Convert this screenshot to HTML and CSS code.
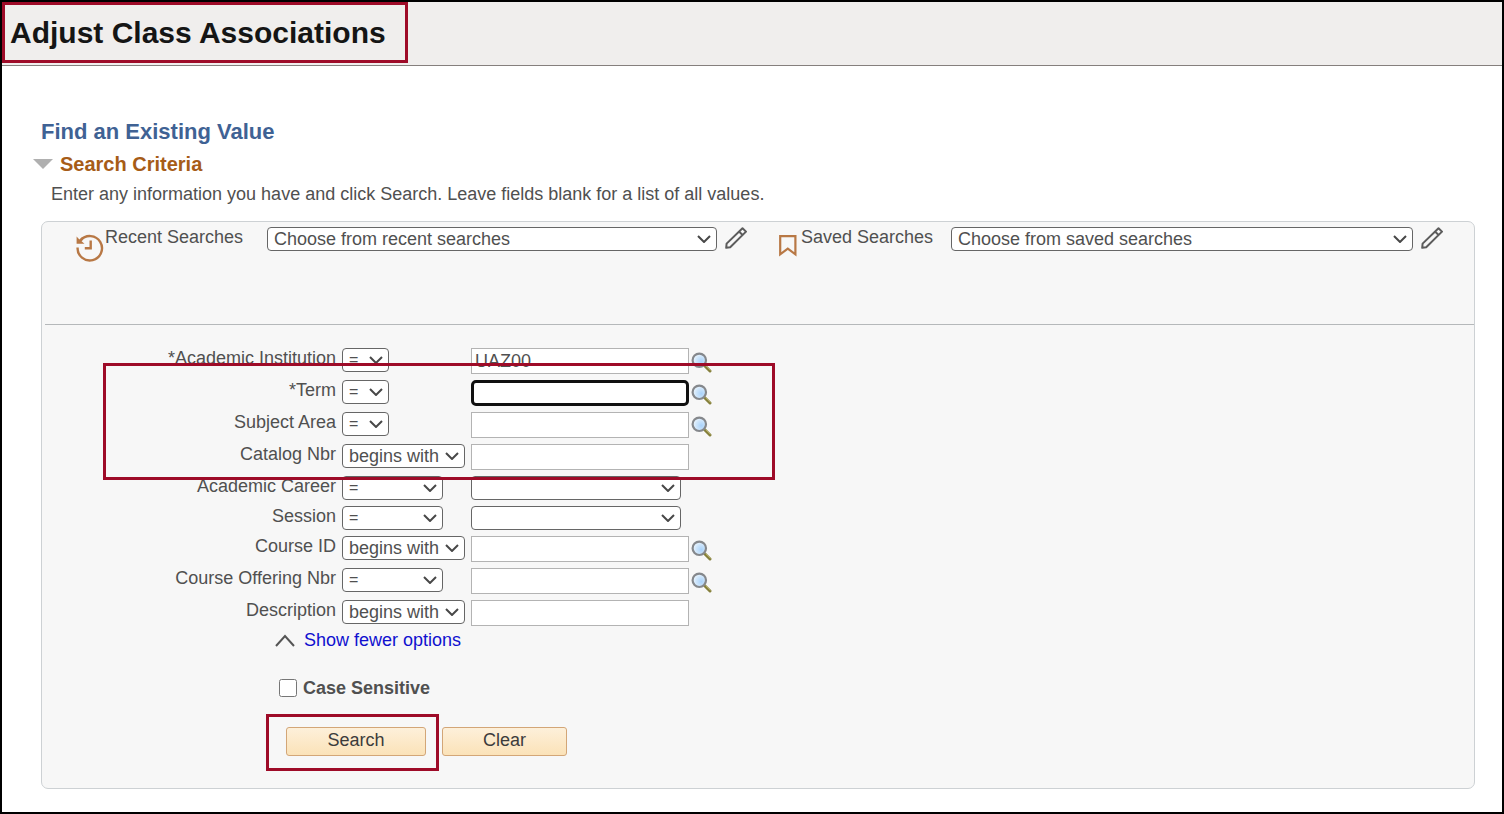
FILE: index.html
```html
<!DOCTYPE html>
<html lang="en">
<head>
    <meta charset="UTF-8">
    <meta name="viewport" content="width=device-width, initial-scale=1.0">
    <title>Adjust Class Associations</title>
    <link rel="stylesheet" href="styles.css">
</head>
<body>
    <!-- Shared icons -->
    <svg class="icon-defs" width="0" height="0" aria-hidden="true">
        <defs>
            <radialGradient id="lens" cx="65%" cy="60%" r="65%">
                <stop offset="0" stop-color="#a9d2fa"/>
                <stop offset="0.6" stop-color="#cfe6fb"/>
                <stop offset="1" stop-color="#edf6fd"/>
            </radialGradient>
        </defs>
        <symbol id="icon-lookup" viewBox="0 0 21 21">
            <path d="M13.5 13.5L19 19" stroke="#85803c" stroke-width="3" stroke-linecap="round"/>
            <path d="M14.5 13.5L19.5 18.5" stroke="#b3ab62" stroke-width="1"/>
            <circle cx="8.3" cy="8.3" r="6.7" fill="url(#lens)" stroke="#85888c" stroke-width="2.2"/>
        </symbol>
        <symbol id="icon-pencil" viewBox="0 0 22 23">
            <path d="M1.2 20.8L1.6 16.6L17.5 1.2L21 4.6L5.2 20.2L1.2 20.8ZM14 4.6L17.6 8" fill="none" stroke="#5c5c5c" stroke-width="2" stroke-linejoin="round"/>
        </symbol>
    </svg>

    <header class="page-header">
        <h1 class="page-title highlight">Adjust Class Associations</h1>
    </header>

    <main>
        <h2>Find an Existing Value</h2>
        <h3><span class="toggle"></span>Search Criteria</h3>
        <p class="hint">Enter any information you have and click Search. Leave fields blank for a list of all values.</p>

        <form class="panel">
            <div class="searches">
                <svg class="history-icon" width="28" height="28" viewBox="0 0 28 28" fill="none" stroke="#b87845" stroke-width="2.4">
                    <path d="M1.6 13.5A12.2 12.2 0 1 0 4.6 6.2"/>
                    <path d="M0.6 2.5V9.8H8.5L5.6 7.2L8 4.5L6 3.2L3.4 5.4Z" fill="#b87845" stroke="none"/>
                    <path d="M14.7 6.5V14.3H8.8"/>
                </svg>
                <label for="recent">Recent Searches</label>
                <select id="recent">
                    <option>Choose from recent searches</option>
                </select>
                <button type="button" class="icon-btn pencil" aria-label="Edit recent searches"><svg width="22" height="23"><use href="#icon-pencil"/></svg></button>

                <svg class="saved-icon" width="18" height="22" viewBox="0 0 18 22" fill="none" stroke="#b87845" stroke-width="2.2">
                    <path d="M1.2 1.2H16.4V19.3L8.8 13.6L1.2 19.3Z"/>
                </svg>
                <label for="saved">Saved Searches</label>
                <select id="saved">
                    <option>Choose from saved searches</option>
                </select>
                <button type="button" class="icon-btn pencil" aria-label="Edit saved searches"><svg width="22" height="23"><use href="#icon-pencil"/></svg></button>
            </div>

            <div class="fields">
                <div class="row">
                    <label for="institution">*Academic Institution</label>
                    <div class="operator"><select class="op-small" aria-label="Academic Institution operator"><option>=</option></select></div>
                    <input type="text" id="institution" value="UAZ00">
                    <button type="button" class="icon-btn" aria-label="Look up Academic Institution"><svg width="21" height="21"><use href="#icon-lookup"/></svg></button>
                </div>

                <div class="row-group">
                    <div class="row">
                        <label for="term">*Term</label>
                        <div class="operator"><select class="op-small" aria-label="Term operator"><option>=</option></select></div>
                        <input type="text" id="term" class="active" autofocus>
                        <button type="button" class="icon-btn" aria-label="Look up Term"><svg width="21" height="21"><use href="#icon-lookup"/></svg></button>
                    </div>
                    <div class="row">
                        <label for="subject">Subject Area</label>
                        <div class="operator"><select class="op-small" aria-label="Subject Area operator"><option>=</option></select></div>
                        <input type="text" id="subject">
                        <button type="button" class="icon-btn" aria-label="Look up Subject Area"><svg width="21" height="21"><use href="#icon-lookup"/></svg></button>
                    </div>
                    <div class="row">
                        <label for="catalog">Catalog Nbr</label>
                        <div class="operator"><select class="op-large" aria-label="Catalog Nbr operator"><option>begins with</option></select></div>
                        <input type="text" id="catalog">
                    </div>
                    <div class="marker highlight"></div>
                </div>

                <div class="row">
                    <label for="career">Academic Career</label>
                    <div class="operator"><select class="op-medium" aria-label="Academic Career operator"><option>=</option></select></div>
                    <select id="career" class="value"><option></option></select>
                </div>
                <div class="row">
                    <label for="session">Session</label>
                    <div class="operator"><select class="op-medium" aria-label="Session operator"><option>=</option></select></div>
                    <select id="session" class="value"><option></option></select>
                </div>
                <div class="row">
                    <label for="course">Course ID</label>
                    <div class="operator"><select class="op-large" aria-label="Course ID operator"><option>begins with</option></select></div>
                    <input type="text" id="course">
                    <button type="button" class="icon-btn" aria-label="Look up Course ID"><svg width="21" height="21"><use href="#icon-lookup"/></svg></button>
                </div>
                <div class="row">
                    <label for="offering">Course Offering Nbr</label>
                    <div class="operator"><select class="op-medium" aria-label="Course Offering Nbr operator"><option>=</option></select></div>
                    <input type="text" id="offering">
                    <button type="button" class="icon-btn" aria-label="Look up Course Offering Nbr"><svg width="21" height="21"><use href="#icon-lookup"/></svg></button>
                </div>
                <div class="row">
                    <label for="description">Description</label>
                    <div class="operator"><select class="op-large" aria-label="Description operator"><option>begins with</option></select></div>
                    <input type="text" id="description">
                </div>
            </div>

            <div class="fewer">
                <svg width="20" height="13" viewBox="0 0 20 13" fill="none" stroke="#555" stroke-width="2"><path d="M1 12L10 2L19 12"/></svg>
                <a href="#">Show fewer options</a>
            </div>

            <div class="case">
                <input type="checkbox" id="case">
                <label for="case">Case Sensitive</label>
            </div>

            <div class="actions">
                <div class="search-box highlight">
                    <button type="submit" class="btn btn-search">Search</button>
                </div>
                <button type="reset" class="btn btn-clear">Clear</button>
            </div>
        </form>
    </main>
</body>
</html>
```

FILE: styles.css
```css
* {
    box-sizing: border-box;
}

body {
    margin: 0;
    min-height: 100vh;
    border: 2px solid #000;
    background-color: #fff;
    font-family: Arial, 'Liberation Sans', sans-serif;
    font-size: 18px;
    line-height: 20px;
    color: #505050;
}

h1, h2, h3, p {
    margin: 0;
}

.icon-defs {
    position: absolute;
}

.highlight {
    border: 3px solid #9e0b28;
}

/* Header */
.page-header {
    display: flex;
    height: 64px;
    align-items: flex-start;
    background-color: #f0eeed;
    border-bottom: 1px solid #857f7d;
}

.page-title {
    padding: 10px 19px 9px 5px;
    font-size: 30px;
    line-height: 36px;
    color: #151515;
}

/* Main */
main {
    padding: 54px 27px 23px 39px;
}

h2 {
    font-size: 22px;
    line-height: 24px;
    color: #3f6294;
}

h3 {
    display: flex;
    align-items: center;
    gap: 7px;
    margin: 8px 0 0 -8px;
    font-size: 20px;
    line-height: 24px;
    color: #a65c17;
}

.toggle {
    border: 10px solid transparent;
    border-top-color: #b0b0b0;
    border-bottom: 0;
}

.hint {
    margin: 8px 0 17px 10px;
}

.panel {
    padding-bottom: 17px;
    border: 1px solid #cdd1d4;
    border-radius: 7px;
    background-color: #f7f7f7;
}

/* Recent and saved searches */
.searches {
    display: grid;
    grid-template-columns: 29px 162px 37fr 62px 22px 150px 38fr 30px;
    align-items: start;
    height: 103px;
    margin-left: 3px;
    padding: 5px 31px 0 31px;
    border-bottom: 1px solid #b5b8ba;
}

.history-icon {
    margin-top: 7px;
}

.saved-icon {
    margin-top: 8px;
}

/* Form controls */
select {
    height: 24px;
    padding: 0 22px 0 6px;
    appearance: none;
    border: 1px solid #666;
    border-radius: 4px;
    background: #fff url("data:image/svg+xml,%3Csvg xmlns='http://www.w3.org/2000/svg' width='14' height='8'%3E%3Cpath d='M1 1L7 7L13 1' fill='none' stroke='%23484848' stroke-width='2'/%3E%3C/svg%3E") no-repeat right 5px center;
    font: inherit;
    color: inherit;
}

input[type="text"] {
    width: 218px;
    height: 26px;
    padding: 0 3px;
    border: 1px solid #b3b3b3;
    background-color: #fff;
    font: inherit;
    color: inherit;
}

input[type="text"].active {
    padding: 0 1px;
    border: 3px solid #101010;
    border-radius: 5px;
    outline: none;
}

.icon-btn {
    margin: 4px 0 0 2px;
    padding: 0;
    border: 0;
    background: none;
    line-height: 0;
    cursor: pointer;
}

.icon-btn.pencil {
    justify-self: start;
    margin: 0 0 0 8px;
}

/* Search fields */
.fields,
.row-group {
    display: flex;
    flex-direction: column;
    gap: 6px;
}

.fields {
    padding-top: 23px;
}

.row-group {
    position: relative;
}

.row {
    display: flex;
    align-items: flex-start;
}

.row > label {
    width: 294px;
    text-align: right;
}

.operator {
    display: flex;
    width: 135px;
    padding-left: 6px;
}

.row > .icon-btn {
    height: 21px;
}

.op-small,
.op-medium {
    font-size: 16px;
}

.op-small {
    width: 47px;
}

.op-medium {
    width: 101px;
}

.op-large {
    width: 123px;
}

.value {
    width: 210px;
}

.marker {
    position: absolute;
    top: -17px;
    bottom: -10px;
    left: 61px;
    width: 672px;
    pointer-events: none;
}

.fewer {
    display: flex;
    align-items: center;
    gap: 9px;
    margin: 4px 0 0 233px;
}

.fewer a {
    color: #1010cf;
    text-decoration: none;
}

.case {
    display: flex;
    align-items: center;
    gap: 6px;
    margin: 28px 0 16px 237px;
    font-weight: bold;
}

.case input {
    width: 18px;
    height: 18px;
    margin: 0;
}

/* Buttons */
.actions {
    display: flex;
    align-items: baseline;
    gap: 3px;
    margin-left: 224px;
}

.search-box {
    padding: 10px 10px 12px 17px;
    line-height: 0;
}

.btn {
    height: 29px;
    padding: 0 0 4px;
    border: 1px solid #d3a677;
    border-radius: 3px;
    background: linear-gradient(#fdf0da, #fbe2b8);
    font: inherit;
    line-height: 20px;
    color: #3c3c3c;
    cursor: pointer;
}

.btn-search {
    width: 140px;
}

.btn-clear {
    width: 125px;
}
```
